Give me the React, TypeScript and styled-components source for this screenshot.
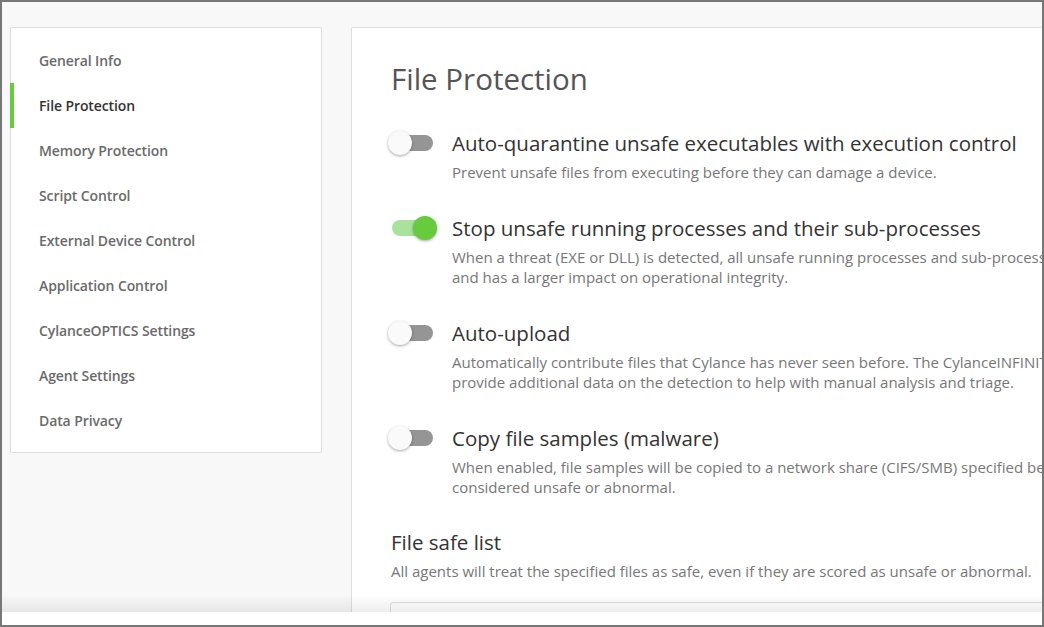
import React, { useState } from 'react';
import styled, { createGlobalStyle } from 'styled-components';

const colors = {
  frame: '#777777',
  page: '#f8f8f8',
  card: '#ffffff',
  border: '#dddddd',
  green: '#66cc3d',
  greenLight: '#a9e29c',
  trackOff: '#959595',
  heading: '#555555',
  text: '#333333',
  muted: '#777777',
  nav: '#6a6a6a',
};

const GlobalStyle = createGlobalStyle`
  html, body {
    margin: 0;
    padding: 0;
    background: #ffffff;
  }
  * {
    box-sizing: border-box;
  }
`;

const Frame = styled.div`
  width: 1044px;
  height: 627px;
  border: 2px solid ${colors.frame};
  display: flex;
  flex-direction: column;
  overflow: hidden;
  font-family: 'Open Sans', 'Noto Sans', sans-serif;
`;

const Page = styled.div`
  flex: 1;
  min-height: 0;
  display: flex;
  align-items: flex-start;
  gap: 29px;
  padding: 25px 0 0 8px;
  background: ${colors.page};
  overflow: hidden;
`;

const Footer = styled.div`
  position: relative;
  height: 13px;
  flex-shrink: 0;
  background: #ffffff;
  &::before {
    content: '';
    position: absolute;
    left: 0;
    right: 0;
    top: -18px;
    height: 18px;
    background: linear-gradient(to bottom, rgba(0, 0, 0, 0), rgba(0, 0, 0, 0.07));
    pointer-events: none;
  }
`;

const Sidebar = styled.nav`
  width: 312px;
  flex-shrink: 0;
  background: ${colors.card};
  border: 1px solid ${colors.border};
  border-radius: 2px;
  padding: 10px 0 9px;
`;

const NavItem = styled.div<{ active?: boolean }>`
  position: relative;
  height: 45px;
  display: flex;
  align-items: center;
  padding-left: 28px;
  font-family: 'Open Sans', 'Noto Sans', sans-serif;
  font-size: 14px;
  font-weight: 600;
  letter-spacing: -0.1px;
  color: ${p => (p.active ? colors.text : colors.nav)};
  cursor: pointer;

  &::before {
    content: '';
    display: ${p => (p.active ? 'block' : 'none')};
    position: absolute;
    left: -1px;
    top: 0;
    bottom: 0;
    width: 4px;
    background: ${colors.green};
  }
`;

const Main = styled.section`
  width: 1100px;
  flex-shrink: 0;
  min-height: 700px;
  background: ${colors.card};
  border: 1px solid ${colors.border};
  border-radius: 2px;
  padding: 32px 0 0 39px;
`;

const Title = styled.h1`
  margin: 0 0 31px;
  font-size: 29.5px;
  line-height: 38px;
  font-weight: 400;
  color: ${colors.heading};
`;

const SettingList = styled.div`
  display: flex;
  flex-direction: column;
  gap: 32px;
`;

const SettingRow = styled.div`
  display: grid;
  grid-template-columns: 61px 1fr;
  align-items: start;
`;

const SwitchSlot = styled.div`
  height: 28px;
  display: flex;
  align-items: center;
`;

const SwitchButton = styled.button<{ on: boolean }>`
  position: relative;
  width: 49px;
  height: 24px;
  margin-left: -3px;
  padding: 0;
  border: none;
  background: transparent;
  cursor: pointer;

  &::before {
    content: '';
    position: absolute;
    left: 4px;
    top: 4px;
    width: 41px;
    height: 16px;
    border-radius: 8px;
    background: ${p => (p.on ? colors.greenLight : colors.trackOff)};
  }

  &::after {
    content: '';
    position: absolute;
    top: 0;
    left: 0;
    width: 24px;
    height: 24px;
    border-radius: 50%;
    background: ${p => (p.on ? colors.green : '#fafafa')};
    box-shadow: 0 1px 3px rgba(0, 0, 0, 0.35);
    transform: translateX(${p => (p.on ? '25px' : '0')});
    transition: transform 0.15s ease;
  }
`;

const SettingText = styled.div`
  white-space: nowrap;
`;

const SettingTitle = styled.div`
  font-size: 20.5px;
  line-height: 28px;
  color: ${colors.text};
`;

const SettingDesc = styled.p`
  margin: 5px 0 0;
  font-size: 15px;
  line-height: 20px;
  color: ${colors.muted};
`;

const Section = styled.div`
  margin-top: 31px;
`;

const SectionTitle = styled.h2`
  margin: 0;
  font-size: 20.5px;
  line-height: 28px;
  font-weight: 400;
  color: ${colors.text};
`;

const SectionDesc = styled.p`
  margin: 5px 0 0;
  font-size: 15px;
  line-height: 20px;
  color: ${colors.muted};
  white-space: nowrap;
`;

const ListBox = styled.div`
  margin: 21px 0 0 -1px;
  width: 800px;
  height: 120px;
  border: 1px solid ${colors.border};
  border-radius: 3px;
  background: #ffffff;
`;

const navItems = [
  'General Info',
  'File Protection',
  'Memory Protection',
  'Script Control',
  'External Device Control',
  'Application Control',
  'CylanceOPTICS Settings',
  'Agent Settings',
  'Data Privacy',
];

const settings = [
  {
    id: 'quarantine',
    title: 'Auto-quarantine unsafe executables with execution control',
    lines: ['Prevent unsafe files from executing before they can damage a device.'],
    on: false,
  },
  {
    id: 'stop',
    title: 'Stop unsafe running processes and their sub-processes',
    lines: [
      'When a threat (EXE or DLL) is detected, all unsafe running processes and sub-processes are terminated. This is more aggressive',
      'and has a larger impact on operational integrity.',
    ],
    on: true,
  },
  {
    id: 'upload',
    title: 'Auto-upload',
    lines: [
      'Automatically contribute files that Cylance has never seen before. The CylanceINFINITY Cloud will analyze these files and',
      'provide additional data on the detection to help with manual analysis and triage.',
    ],
    on: false,
  },
  {
    id: 'samples',
    title: 'Copy file samples (malware)',
    lines: [
      'When enabled, file samples will be copied to a network share (CIFS/SMB) specified below when they are',
      'considered unsafe or abnormal.',
    ],
    on: false,
  },
];

export default function App() {
  const [state, setState] = useState<Record<string, boolean>>(
    Object.fromEntries(settings.map(s => [s.id, s.on]))
  );

  return (
    <>
      <GlobalStyle />
      <Frame>
        <Page>
          <Sidebar>
            {navItems.map(item => (
              <NavItem key={item} active={item === 'File Protection'}>
                {item}
              </NavItem>
            ))}
          </Sidebar>
          <Main>
            <Title>File Protection</Title>
            <SettingList>
              {settings.map(s => (
                <SettingRow key={s.id}>
                  <SwitchSlot>
                    <SwitchButton
                      on={state[s.id]}
                      aria-pressed={state[s.id]}
                      onClick={() => setState(prev => ({ ...prev, [s.id]: !prev[s.id] }))}
                    />
                  </SwitchSlot>
                  <SettingText>
                    <SettingTitle>{s.title}</SettingTitle>
                    <SettingDesc>
                      {s.lines.map((line, i) => (
                        <React.Fragment key={i}>
                          {i > 0 && <br />}
                          {line}
                        </React.Fragment>
                      ))}
                    </SettingDesc>
                  </SettingText>
                </SettingRow>
              ))}
            </SettingList>
            <Section>
              <SectionTitle>File safe list</SectionTitle>
              <SectionDesc>
                All agents will treat the specified files as safe, even if they are scored as unsafe or abnormal.
              </SectionDesc>
              <ListBox />
            </Section>
          </Main>
        </Page>
        <Footer />
      </Frame>
    </>
  );
}
